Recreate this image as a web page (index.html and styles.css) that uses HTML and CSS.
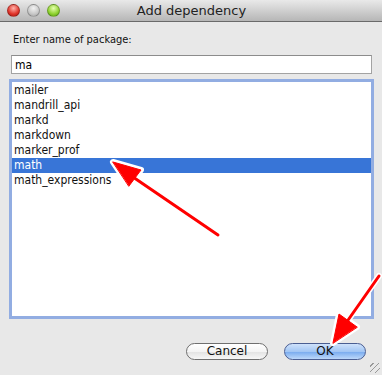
FILE: index.html
```html
<!DOCTYPE html>
<html lang="en">
<head>
  <meta charset="UTF-8" />
  <title>Add dependency</title>
  <link rel="stylesheet" href="styles.css">
</head>
<body>
  <div class="window">
    <div class="titlebar">
      <span class="light red"></span>
      <span class="light gray"></span>
      <span class="light green"></span>
      <div class="title">Add dependency</div>
    </div>

    <div class="content">
      <label class="prompt" for="pkg">Enter name of package:</label>
      <input type="text" id="pkg" class="field" value="ma">

      <ul class="list">
        <li>mailer</li>
        <li>mandrill_api</li>
        <li>markd</li>
        <li>markdown</li>
        <li>marker_prof</li>
        <li class="selected">math</li>
        <li>math_expressions</li>
      </ul>

      <div class="buttons">
        <button class="btn cancel">Cancel</button>
        <button class="btn ok">OK</button>
      </div>
    </div>

    <div class="grip"></div>

    <svg class="arrows" width="382" height="375" viewBox="0 0 382 375">
      <g stroke="#fff" stroke-width="6" stroke-linecap="round" stroke-linejoin="round" fill="#fff">
        <line x1="218" y1="235" x2="130" y2="175"/>
        <polygon points="113,162 141,170 129,186"/>
        <line x1="379" y1="276" x2="346" y2="323"/>
        <polygon points="333,343 339,314 357,327"/>
      </g>
      <g stroke="#f00" stroke-width="3" stroke-linecap="round" fill="#f00">
        <line x1="218" y1="235" x2="130" y2="175"/>
        <polygon points="113,162 141,170 129,186" stroke-width="1"/>
        <line x1="379" y1="276" x2="346" y2="323"/>
        <polygon points="333,343 339,314 357,327" stroke-width="1"/>
      </g>
    </svg>
  </div>
</body>
</html>
```

FILE: styles.css
```css
body {
  margin: 0;
  font-family: "DejaVu Sans", "Liberation Sans", sans-serif;
}
.window {
  position: relative;
  width: 382px;
  height: 375px;
  background: #e8e8e8;
  display: flex;
  flex-direction: column;
  overflow: hidden;
}
.titlebar {
  height: 21px;
  border-bottom: 1px solid #6a6a6a;
  background: linear-gradient(#e9e9e9, #b6b6b6);
  display: flex;
  align-items: center;
  gap: 7px;
  padding-left: 7px;
}
.light {
  width: 13px;
  height: 13px;
  border-radius: 50%;
  border: 1px solid rgba(0, 0, 0, 0.25);
  box-sizing: border-box;
}
.red { background: radial-gradient(circle at 50% 30%, #ffb3ab, #e0352b 60%, #a3140e); }
.gray { background: radial-gradient(circle at 50% 30%, #f2f2f2, #c8c8c8 60%, #9d9d9d); }
.green { background: radial-gradient(circle at 50% 30%, #e6ffb0, #8fd22f 60%, #4f9a10); }
.title {
  flex: 1;
  text-align: center;
  margin-right: 66px;
  font-size: 13px;
  color: #222;
}
.content {
  flex: 1;
  display: flex;
  flex-direction: column;
  padding: 11px 8px 0 10px;
  font-family: "DejaVu Sans Condensed", "DejaVu Sans", sans-serif;
}
.prompt {
  font-size: 11px;
  color: #111;
  margin-left: 3px;
}
.field {
  margin: 9px 0 0 1px;
  width: 361px;
  height: 19px;
  box-sizing: border-box;
  border: 1px solid #a3a3a3;
  border-top-color: #8c8c8c;
  padding: 0 0 0 3px;
  font-family: inherit;
  font-size: 12px;
  background: #fff;
  outline: none;
}
.list {
  list-style: none;
  margin: 5px 0 0 -1px;
  padding: 1px 0 0;
  width: 365px;
  height: 240px;
  box-sizing: border-box;
  border: 3px solid #92ade2;
  background: #fff;
}
.list li {
  height: 15px;
  line-height: 15px;
  padding-left: 2px;
  font-size: 12px;
  color: #111;
}
.list li.selected {
  background: #3875d7;
  color: #fff;
}
.buttons {
  display: flex;
  justify-content: flex-end;
  gap: 16px;
  margin-top: 24px;
  padding-right: 8px;
}
.btn {
  width: 82px;
  height: 17px;
  border-radius: 9px;
  font-family: "DejaVu Sans", sans-serif;
  font-size: 12px;
  line-height: 15px;
  padding: 0;
  color: #111;
}
.cancel {
  border: 1px solid #6f6f6f;
  background: linear-gradient(#ffffff, #f4f4f4 50%, #e2e2e2 51%, #f7f7f7);
}
.ok {
  border: 1px solid #4a5e92;
  background: linear-gradient(#cfe2fb, #a2c6f4 50%, #76a9ee 51%, #bcd8fa);
}
.grip {
  position: absolute;
  right: 2px;
  bottom: 2px;
  width: 10px;
  height: 10px;
  background: repeating-linear-gradient(135deg, transparent 0 2px, #999 2px 3px, transparent 3px 4px);
}
.arrows {
  position: absolute;
  left: 0;
  top: 0;
  pointer-events: none;
}
```
